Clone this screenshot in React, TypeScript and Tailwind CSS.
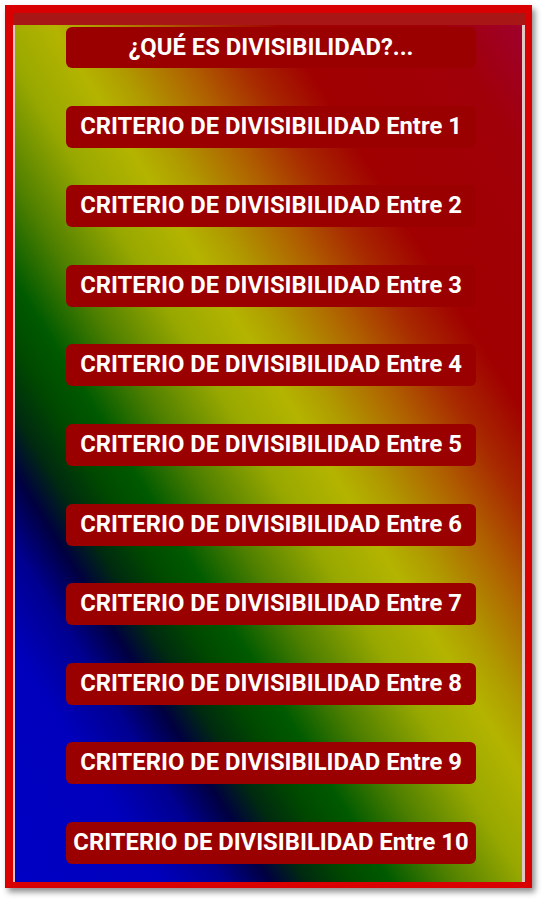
import React from "react";

// Lista de temas del menú principal
const temas = [
  "¿QUÉ ES DIVISIBILIDAD?...",
  ...Array.from({ length: 10 }, (_, i) => `CRITERIO DE DIVISIBILIDAD Entre ${i + 1}`),
];

export default function App() {
  return (
    <div className="w-[543px] h-[900px] bg-white pt-[5px] pl-[5px]" style={{ fontFamily: "Roboto, 'Liberation Sans', sans-serif" }}>
      {/* Marco rojo */}
      <div className="w-[527px] h-[883px] bg-[#d80000] pt-[8px] pl-[8px] pr-[7px] pb-[6px] flex flex-col shadow-[3px_4px_6px_rgba(0,0,0,0.45)]">
        <div className="h-[12px] bg-[#a81616]" />
        <div className="flex-1 flex border-l-2 border-r-[3px] border-[#e2c6c6]">
          <div
            className="flex-1 flex flex-col gap-[37.6px] pt-[2px]"
            style={{
              background:
                "linear-gradient(58deg, #0000c4 0%, #0000bc 14%, #000090 20%, #000040 24.5%, #002a10 28%, #004800 32%, #005a00 36%, #508000 42%, #98a800 49%, #b4b400 55%, #b09a00 59%, #b06400 65%, #a82a00 71%, #a00000 77%, #a00008 92%, #a0002c 100%)",
            }}
          >
            {temas.map((t, i) => (
              <button
                key={t}
                className={`ml-[51px] w-[410px] ${i === 0 ? "h-[41px]" : "h-[42px]"} rounded-[6px] bg-[#9b0000] text-white font-bold text-[23.8px] leading-none flex items-center justify-center whitespace-nowrap`}
              >
                {t}
              </button>
            ))}
          </div>
        </div>
      </div>
    </div>
  );
}
